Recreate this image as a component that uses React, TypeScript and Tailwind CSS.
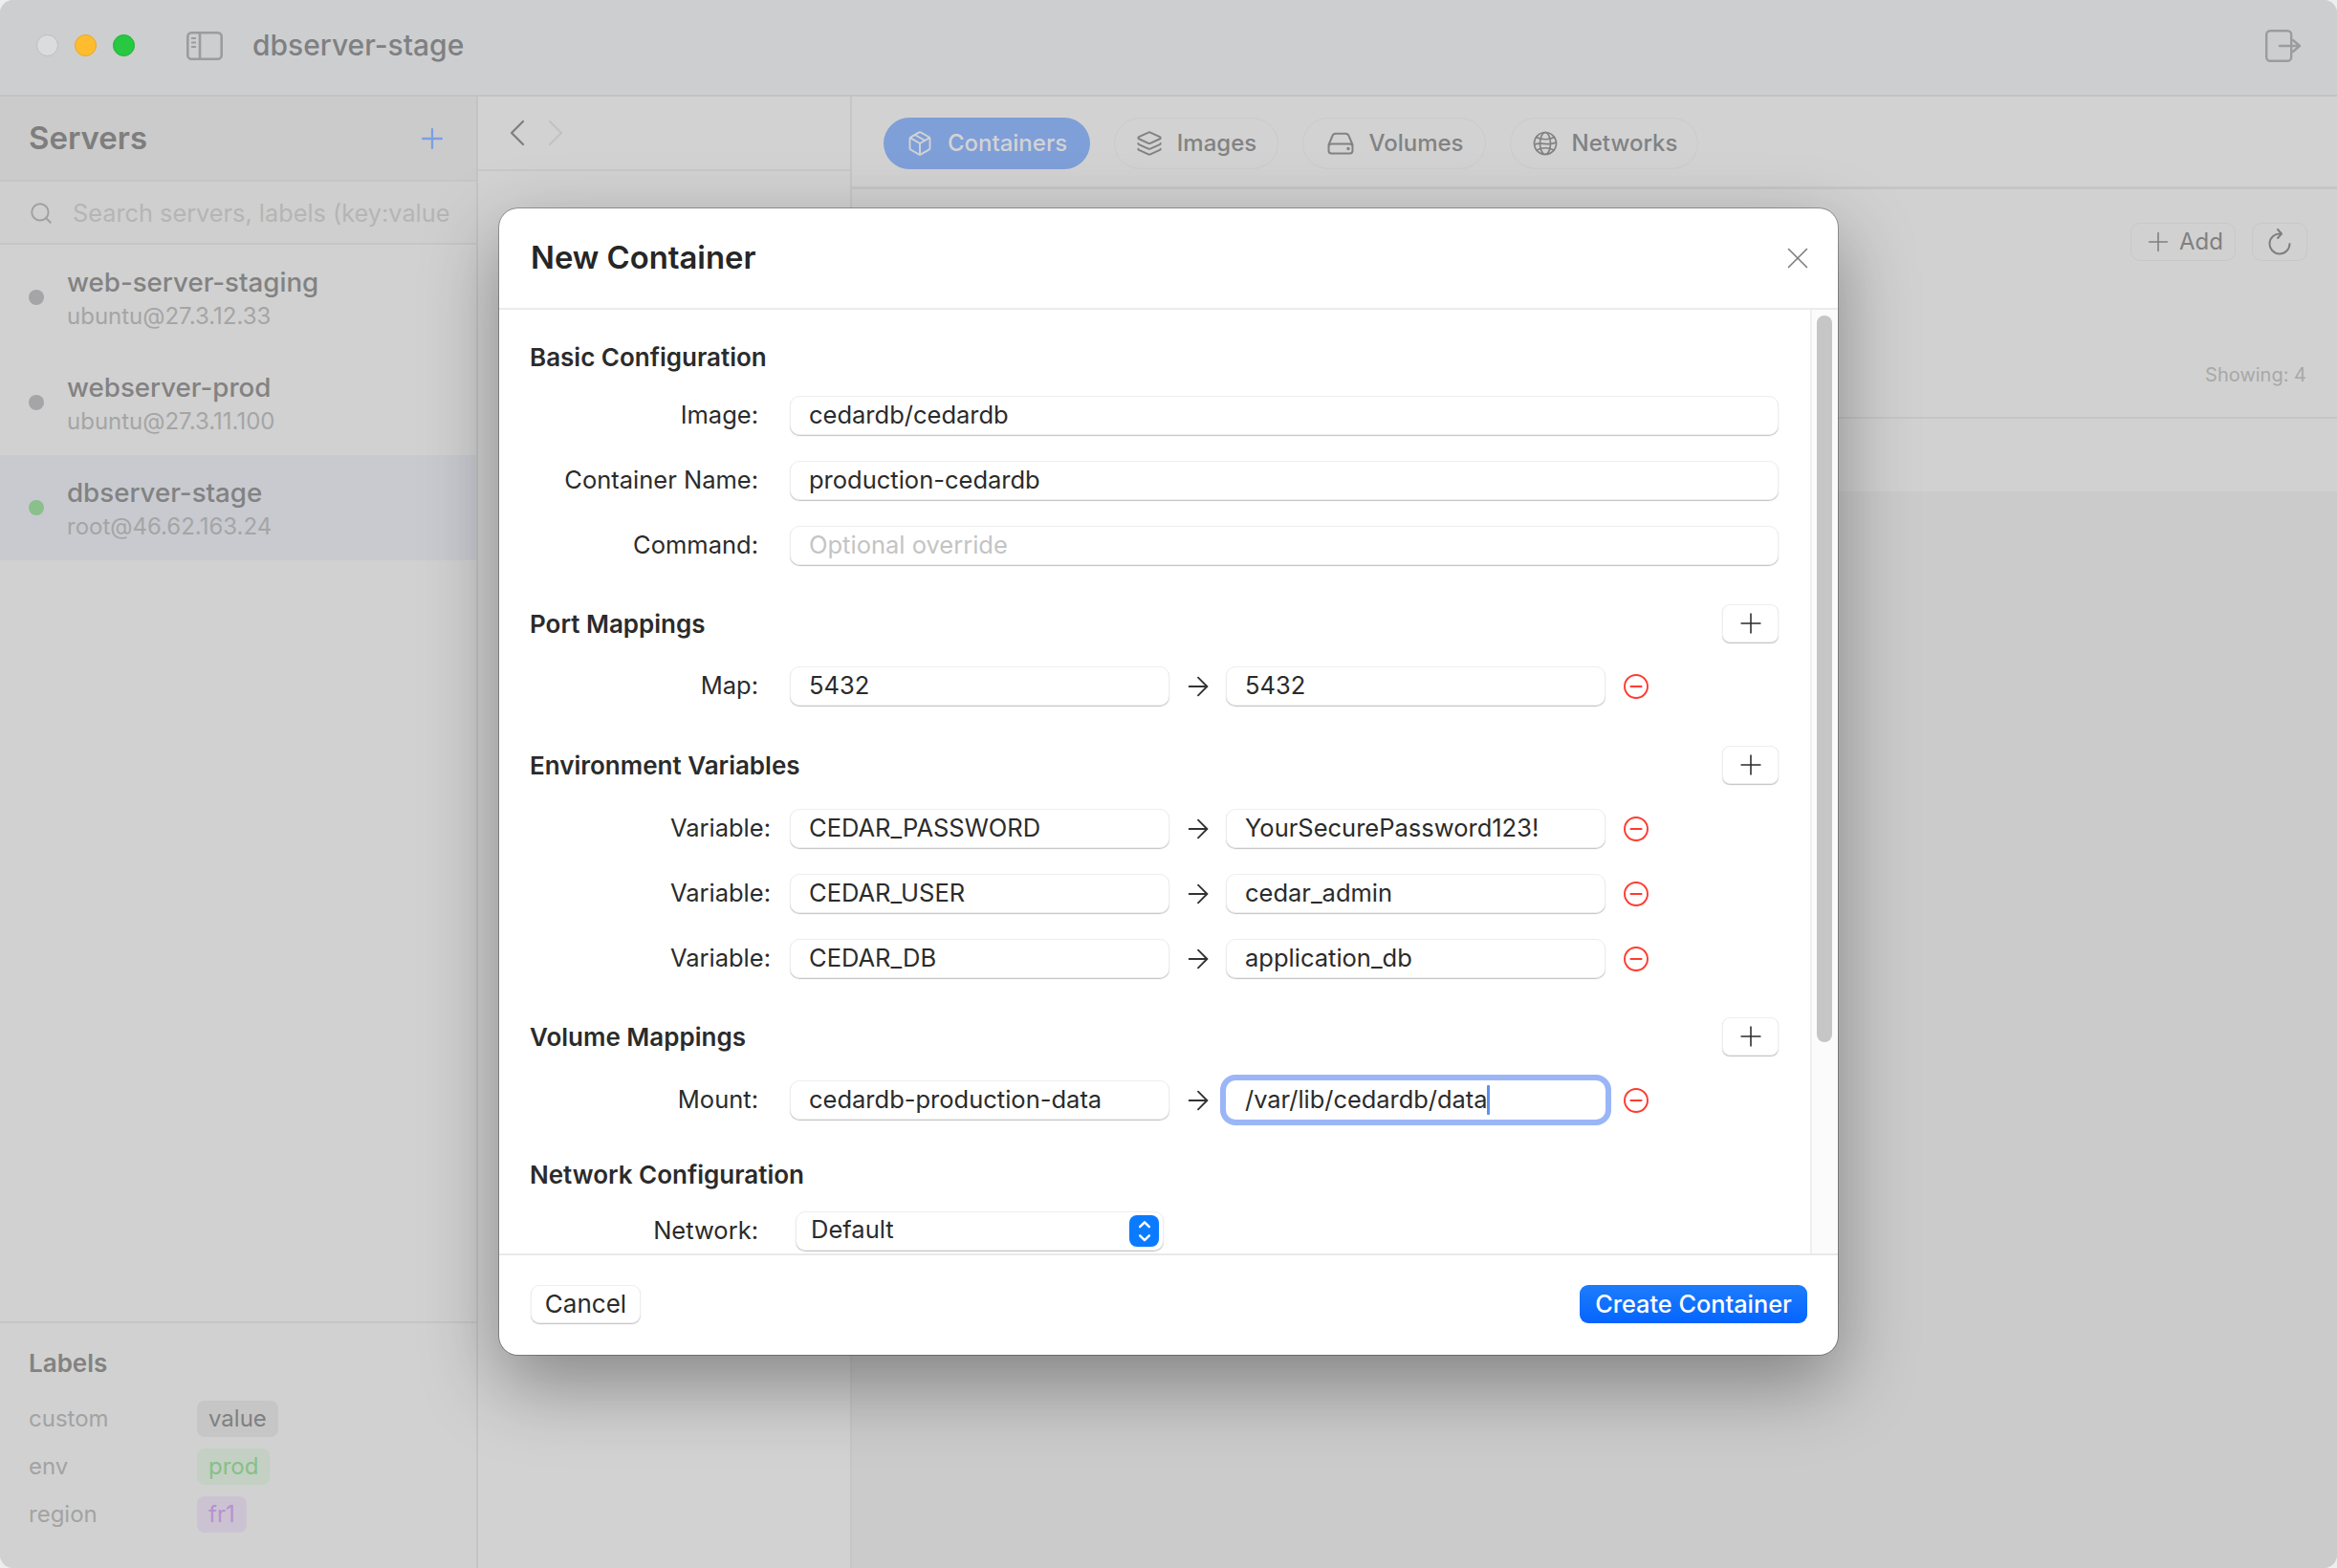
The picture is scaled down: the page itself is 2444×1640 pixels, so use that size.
import React from "react";
import { ChevronLeft, ChevronRight, Plus, Search, X, Package, Layers, ArrowRight, ChevronUp, ChevronDown } from "lucide-react";

function SidebarIcon() {
  return (
    <svg width="38" height="30" viewBox="0 0 38 30" fill="none" stroke="#9c9c9e" strokeWidth="2.6">
      <rect x="1.3" y="1.3" width="35.4" height="27.4" rx="4" />
      <path d="M14 1.3v27.4" />
      <path d="M5 7h5M5 11.5h5M5 16h5" strokeWidth="2" />
    </svg>
  );
}
function ExitIcon() {
  return (
    <svg width="38" height="34" viewBox="0 0 38 34" fill="none" stroke="#9c9c9e" strokeWidth="2.4" strokeLinecap="round" strokeLinejoin="round">
      <rect x="1.2" y="1.2" width="26" height="31.6" rx="4" />
      <path d="M15 17h21M29 11l7 6-7 6" />
    </svg>
  );
}
function DriveIcon() {
  return (
    <svg width="28" height="24" viewBox="0 0 28 24" fill="none" stroke="#828282" strokeWidth="2" strokeLinecap="round" strokeLinejoin="round">
      <path d="M1.5 13.5 5.5 4a3.5 3.5 0 0 1 3.2-2.3h10.6A3.5 3.5 0 0 1 22.5 4l4 9.5" />
      <rect x="1.5" y="12.5" width="25" height="10" rx="3" />
      <circle cx="22" cy="17.5" r="0.7" fill="#828282" />
    </svg>
  );
}
function GlobeIcon() {
  return (
    <svg width="26" height="26" viewBox="0 0 26 26" fill="none" stroke="#828282" strokeWidth="1.7" strokeLinecap="round" strokeLinejoin="round">
      <circle cx="13" cy="13" r="11.5" />
      <ellipse cx="13" cy="13" rx="5.5" ry="11.5" />
      <path d="M3.5 6.5C9 9.5 17 9.5 22.5 6.5" />
      <path d="M1.8 14C9 11 17 16 24.2 12" />
      <path d="M4 20c6-3 12-3 18 0" />
    </svg>
  );
}
function RefreshIcon() {
  return (
    <svg width="24" height="28" viewBox="0 0 24 28" fill="none" stroke="#7f7f7f" strokeWidth="2" strokeLinecap="round" strokeLinejoin="round">
      <path d="M13 5.5A10.5 10.5 0 1 0 22.5 16" />
      <path d="M10 1l4 4.5-4 4.5" />
    </svg>
  );
}
function MinusCircle() {
  return (
    <svg width="26" height="26" viewBox="0 0 26 26" fill="none" stroke="#fe3b30" strokeWidth="1.9" strokeLinecap="round">
      <circle cx="13" cy="13" r="12" />
      <path d="M7.5 13h11" strokeWidth="2.2" />
    </svg>
  );
}

function Tab({ icon, label, active, w }: { icon: React.ReactNode; label: string; active?: boolean; w: string }) {
  return (
    <div className={`${w} h-[54px] rounded-[27px] flex items-center justify-center gap-[15px] text-[24px] font-medium ${active ? "bg-[#7f9fd8] text-[#d3d3d3]" : "border border-[#cbcbcb] text-[#828282]"}`}>
      {icon}
      <span>{label}</span>
    </div>
  );
}

function Server({ name, host, online, selected }: { name: string; host: string; online?: boolean; selected?: boolean }) {
  return (
    <div className={`h-[110px] flex items-center pl-[30px] ${selected ? "bg-[#c8cad0]" : ""}`}>
      <div className={`w-[16px] h-[16px] rounded-full shrink-0 ${online ? "bg-[#89c08c]" : "bg-[#a5a5a8]"}`} />
      <div className="ml-[24px] mt-[3px] flex flex-col">
        <div className="text-[27.7px] leading-[36px] font-medium text-[#828282]">{name}</div>
        <div className="text-[24px] leading-[36px] text-[#a5a5a5]">{host}</div>
      </div>
    </div>
  );
}

function LabelRow({ k, v, chip }: { k: string; v: string; chip: string }) {
  return (
    <div className="flex items-center h-[38px]">
      <div className="w-[176px] text-[24px] text-[#a3a3a3]">{k}</div>
      <div className={`h-[38px] px-[12px] rounded-[8px] flex items-center text-[24px] ${chip}`}>{v}</div>
    </div>
  );
}

const fieldBase = "h-[41px] rounded-[10px] bg-white border border-[#eeeeee] shadow-[0_1px_1px_rgba(0,0,0,0.24)] flex items-center pl-[19px] text-[25.5px] text-[#2b2b2b]";

function Label({ text, pr = "pr-[33px]" }: { text: string; pr?: string }) {
  return <div className={`w-[272px] shrink-0 text-right text-[25.5px] text-[#2b2b2b] ${pr}`}>{text}</div>;
}

function FullRow({ label, value, placeholder, className }: { label: string; value: string; placeholder?: boolean; className?: string }) {
  return (
    <div className={`flex items-center ${className ?? ""}`}>
      <Label text={label} />
      <div className={`${fieldBase} w-[1034px] ${placeholder ? "text-[#c4c4c4]" : ""}`}>{value}</div>
    </div>
  );
}

function MapRow({ label, left, right, pr, focused, className }: { label: string; left: string; right: string; pr?: string; focused?: boolean; className?: string }) {
  return (
    <div className={`flex items-center ${className ?? ""}`}>
      <Label text={label} pr={pr} />
      <div className={`${fieldBase} w-[397px]`}>{left}</div>
      <div className="w-[59px] flex justify-center">
        <ArrowRight size={32} color="#333333" strokeWidth={1.4} />
      </div>
      {focused ? (
        <div className="w-[397px] h-[41px] rounded-[10px] bg-white shadow-[0_0_0_6px_#9ab6f7] flex items-center pl-[20px] text-[25.4px] text-[#2b2b2b]">
          <span>{right}</span>
          <span className="w-[3px] h-[31px] bg-[#5f8ff0] rounded-[1px]" />
        </div>
      ) : (
        <div className={`${fieldBase} w-[397px]`}>{right}</div>
      )}
      <div className="ml-[19px]">
        <MinusCircle />
      </div>
    </div>
  );
}

function SectionTitle({ text, add, className }: { text: string; add?: boolean; className?: string }) {
  return (
    <div className={`h-[40px] flex items-center justify-between w-[1306px] ${className ?? ""}`}>
      <div className="text-[26px] font-semibold text-[#2b2b2b]">{text}</div>
      {add && (
        <div className="w-[59px] h-[40px] rounded-[8px] bg-white border border-[#eeeeee] shadow-[0_1px_1px_rgba(0,0,0,0.24)] flex items-center justify-center">
          <Plus size={34} color="#2b2b2b" strokeWidth={1.1} />
        </div>
      )}
    </div>
  );
}

export default function App() {
  return (
    <div className="w-[2444px] h-[1640px] bg-[#eeeeee] font-['Inter',sans-serif]">
      <div className="relative w-full h-full rounded-[14px] overflow-hidden bg-[#d1d1d1] flex flex-col">
        {/* title bar */}
        <div className="h-[101px] shrink-0 bg-[#cdced0] border-b-2 border-[#c2c3c5] flex items-center pl-[38px] pr-[37px] pb-[4px]">
          <div className="flex gap-[17px]">
            <div className="w-[23px] h-[23px] rounded-full bg-[#dadcdf] border border-[#bdbec0]" />
            <div className="w-[23px] h-[23px] rounded-full bg-[#febc2e] border border-[#e9a823]" />
            <div className="w-[23px] h-[23px] rounded-full bg-[#28c840] border border-[#20b236]" />
          </div>
          <div className="ml-[54px]">
            <SidebarIcon />
          </div>
          <div className="ml-[31px] text-[30px] font-medium text-[#7f8082]">dbserver-stage</div>
          <div className="ml-auto">
            <ExitIcon />
          </div>
        </div>

        <div className="flex-1 flex min-h-0">
          {/* sidebar */}
          <div className="w-[500px] shrink-0 bg-[#d1d1d1] border-r-2 border-[#c4c4c4] flex flex-col">
            <div className="h-[89px] shrink-0 bg-[#cbcbcb] border-b-2 border-[#c6c6c6] flex items-center justify-between pl-[30px] pr-[29px]">
              <div className="text-[33px] font-semibold text-[#7e7e7e]">Servers</div>
              <Plus size={34} color="#7b9fe2" strokeWidth={1.6} />
            </div>
            <div className="h-[66px] shrink-0 bg-[#cfcfcf] border-b-2 border-[#c6c6c6] flex items-center pl-[30px] pt-[2px]">
              <Search size={26} color="#a0a0a0" strokeWidth={1.8} />
              <div className="ml-[20px] text-[25.3px] text-[#b5b5b5] whitespace-nowrap">Search servers, labels (key:value</div>
            </div>
            <Server name="web-server-staging" host="ubuntu@27.3.12.33" />
            <Server name="webserver-prod" host="ubuntu@27.3.11.100" />
            <Server name="dbserver-stage" host="root@46.62.163.24" online selected />
            <div className="mt-auto h-[258px] border-t-2 border-[#c6c6c6] pl-[30px] pt-[23px] flex flex-col">
              <div className="text-[26px] font-semibold text-[#828282] h-[36px] flex items-center">Labels</div>
              <div className="mt-[22px] flex flex-col gap-[12px]">
                <LabelRow k="custom" v="value" chip="bg-[#c6c6c6] text-[#808080]" />
                <LabelRow k="env" v="prod" chip="bg-[#c3d0c3] text-[#85c088]" />
                <LabelRow k="region" v="fr1" chip="bg-[#cbc3d2] text-[#b690d0]" />
              </div>
            </div>
          </div>

          {/* nav column */}
          <div className="w-[391px] shrink-0 bg-[#d2d2d2] border-r-2 border-[#c6c6c6] flex flex-col">
            <div className="h-[78px] border-b-2 border-[#c8c8c8] flex items-center pl-[17px]">
              <ChevronLeft size={48} color="#7e7e7e" strokeWidth={1.1} />
              <ChevronRight size={48} color="#c2c2c2" strokeWidth={1.1} className="-ml-[8px]" />
            </div>
          </div>

          {/* main */}
          <div className="flex-1 flex flex-col min-w-0">
            <div className="h-[97px] shrink-0 bg-[#d2d2d2] border-b-[3px] border-[#c6c6c6] flex items-center pl-[33px] pt-[3px] gap-[25px]">
              <Tab w="w-[216px]" active label="Containers" icon={<Package size={28} color="#d3d3d3" strokeWidth={1.6} />} />
              <Tab w="w-[172px]" label="Images" icon={<Layers size={28} color="#828282" strokeWidth={1.7} />} />
              <Tab w="w-[192px] pl-[3px]" label="Volumes" icon={<DriveIcon />} />
              <Tab w="w-[197px] pl-[2px]" label="Networks" icon={<GlobeIcon />} />
            </div>
            <div className="h-[240px] shrink-0 bg-[#d1d1d1] border-b-2 border-[#c6c6c6] flex flex-col items-end pr-[32px]">
              <div className="mt-[35px] flex items-center gap-[17px] -mr-[1px]">
                <div className="w-[110px] h-[40px] rounded-[10px] border border-[#c8c8c8] flex items-center justify-center gap-[6px] text-[24px] text-[#808080]">
                  <Plus size={32} color="#7f7f7f" strokeWidth={1.2} />
                  <span>Add</span>
                </div>
                <div className="w-[58px] h-[40px] rounded-[10px] border border-[#c8c8c8] flex items-center justify-center">
                  <RefreshIcon />
                </div>
              </div>
              <div className="mt-[104px] text-[20px] text-[#a8a8a8]">Showing: 4</div>
            </div>
            <div className="h-[76px] shrink-0 bg-[#d1d1d1]" />
            <div className="flex-1 bg-[#cbcbcb]" />
          </div>
        </div>

        {/* modal */}
        <div className="absolute left-[522px] top-[218px] w-[1400px] h-[1199px] rounded-[20px] bg-white shadow-[0_0_0_1px_rgba(0,0,0,0.28),0_30px_80px_rgba(0,0,0,0.36)] overflow-hidden flex flex-col">
          <div className="h-[106px] shrink-0 border-b-2 border-[#ebebeb] flex items-center justify-between pl-[33px] pr-[23px]">
            <div className="text-[32.8px] font-semibold text-[#262626]">New Container</div>
            <X size={38} color="#7b7b7b" strokeWidth={1} />
          </div>
          <div className="flex-1 flex min-h-0 overflow-hidden">
            <div className="flex-1 pl-[32px] pt-[29px] overflow-hidden">
              <SectionTitle text="Basic Configuration" />
              <FullRow className="mt-[21px]" label="Image:" value="cedardb/cedardb" />
              <FullRow className="mt-[27px]" label="Container Name:" value="production-cedardb" />
              <FullRow className="mt-[27px]" label="Command:" value="Optional override" placeholder />

              <SectionTitle className="mt-[41px]" text="Port Mappings" add />
              <MapRow className="mt-[25px]" label="Map:" left="5432" right="5432" />

              <SectionTitle className="mt-[42px]" text="Environment Variables" add />
              <MapRow className="mt-[26px]" label="Variable:" pr="pr-[20px]" left="CEDAR_PASSWORD" right="YourSecurePassword123!" />
              <MapRow className="mt-[27px]" label="Variable:" pr="pr-[20px]" left="CEDAR_USER" right="cedar_admin" />
              <MapRow className="mt-[27px]" label="Variable:" pr="pr-[20px]" left="CEDAR_DB" right="application_db" />

              <SectionTitle className="mt-[41px]" text="Volume Mappings" add />
              <MapRow className="mt-[26px]" label="Mount:" left="cedardb-production-data" right="/var/lib/cedardb/data" focused />

              <SectionTitle className="mt-[37px]" text="Network Configuration" />
              <div className="mt-[19px] flex items-center">
                <div className="w-[278px] shrink-0 text-right text-[25.5px] text-[#2b2b2b] pr-[39px]">Network:</div>
                <div className="relative w-[385px] h-[41px] rounded-[10px] bg-white border border-[#eeeeee] shadow-[0_1px_1px_rgba(0,0,0,0.24)] flex items-center pl-[15px] text-[25.5px] text-[#2b2b2b]">
                  <span className="-mt-[3px]">Default</span>
                  <div className="absolute right-[4px] top-[3px] w-[31px] h-[33px] rounded-[8px] bg-[#0a7bff] flex flex-col items-center justify-center">
                    <ChevronUp size={20} color="#ffffff" strokeWidth={3} className="-mb-[3px]" />
                    <ChevronDown size={20} color="#ffffff" strokeWidth={3} className="-mt-[3px]" />
                  </div>
                </div>
              </div>
            </div>
            <div className="w-[29px] shrink-0 bg-[#fbfbfb] border-l-2 border-[#efefef] pl-[5px] pt-[6px]">
              <div className="w-[16px] h-[760px] rounded-[8px] bg-[#c6c6c6]" />
            </div>
          </div>
          <div className="h-[106px] shrink-0 border-t-2 border-[#e9e9e9] flex items-center justify-between pl-[33px] pr-[32px] pb-[3px]">
            <div className="w-[115px] h-[40px] rounded-[9px] bg-white border border-[#eeeeee] shadow-[0_1px_1px_rgba(0,0,0,0.24)] flex items-center justify-center text-[26px] text-[#2b2b2b]">Cancel</div>
            <div className="w-[238px] h-[40px] rounded-[9px] bg-gradient-to-b from-[#1d7cfb] to-[#0564ff] flex items-center justify-center text-[25.3px] font-medium text-white">Create Container</div>
          </div>
        </div>
      </div>
    </div>
  );
}
